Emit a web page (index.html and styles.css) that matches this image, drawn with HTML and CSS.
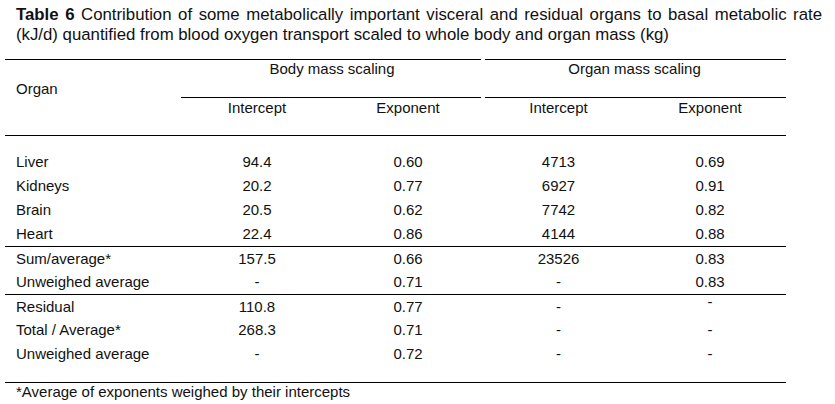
FILE: index.html
```html
<!DOCTYPE html>
<html>
<head>
<meta charset="utf-8">
<link rel="stylesheet" href="styles.css">
</head>
<body>
<div class="page">
  <p class="caption"><b>Table 6</b> Contribution of some metabolically important visceral and residual organs to basal metabolic rate (kJ/d) quantified from blood oxygen transport scaled to whole body and organ mass (kg)</p>
  <table class="data">
    <colgroup>
      <col class="c0"><col class="c1"><col class="c2"><col class="c3"><col class="c4">
    </colgroup>
    <thead>
      <tr class="h1">
        <th class="organ" rowspan="2">Organ</th>
        <th class="grp grp-body" colspan="2">Body mass scaling</th>
        <th class="grp grp-organ" colspan="2">Organ mass scaling</th>
      </tr>
      <tr class="h2">
        <th>Intercept</th>
        <th>Exponent</th>
        <th>Intercept</th>
        <th>Exponent</th>
      </tr>
    </thead>
    <tbody>
      <tr class="gap-top"><td colspan="5"></td></tr>
      <tr><td class="name">Liver</td><td>94.4</td><td>0.60</td><td>4713</td><td>0.69</td></tr>
      <tr><td class="name">Kidneys</td><td>20.2</td><td>0.77</td><td>6927</td><td>0.91</td></tr>
      <tr><td class="name">Brain</td><td>20.5</td><td>0.62</td><td>7742</td><td>0.82</td></tr>
      <tr><td class="name">Heart</td><td>22.4</td><td>0.86</td><td>4144</td><td>0.88</td></tr>
      <tr class="sep"><td class="name">Sum/average*</td><td>157.5</td><td>0.66</td><td>23526</td><td>0.83</td></tr>
      <tr><td class="name">Unweighed average</td><td>-</td><td>0.71</td><td>-</td><td>0.83</td></tr>
      <tr class="sep"><td class="name">Residual</td><td>110.8</td><td>0.77</td><td>-</td><td><span class="raised">-</span></td></tr>
      <tr><td class="name">Total / Average*</td><td>268.3</td><td>0.71</td><td>-</td><td>-</td></tr>
      <tr><td class="name">Unweighed average</td><td>-</td><td>0.72</td><td>-</td><td>-</td></tr>
      <tr class="gap-bottom"><td colspan="5"></td></tr>
    </tbody>
  </table>
  <p class="note">*Average of exponents weighed by their intercepts</p>
</div>
</body>
</html>
```

FILE: styles.css
```css
html, body {
  margin: 0;
  padding: 0;
  background: #fff;
}

body {
  font-family: "Liberation Sans", Arial, sans-serif;
  color: #111;
}

.page {
  width: 835px;
  height: 404px;
  overflow: hidden;
}

.caption {
  margin: 0;
  padding: 5px 0 0 16px;
  width: 806px;
  font-size: 16.8px;
  line-height: 20px;
  text-align: justify;
}

.caption b {
  font-weight: bold;
}

.data {
  margin: 14px 0 0 5px;
  width: 781px;
  table-layout: fixed;
  border-collapse: separate;
  border-spacing: 0;
  font-size: 15px;
}

.c0 { width: 176px; }
.c1 { width: 152px; }
.c2 { width: 150px; }
.c3 { width: 151px; }
.c4 { width: 152px; }

.data th,
.data td {
  padding: 0;
  font-weight: normal;
  text-align: center;
  vertical-align: top;
}

.h1 th {
  height: 37px;
  padding-top: 1px;
  padding-bottom: 1px;
  line-height: 18px;
}

.data th.organ {
  text-align: left;
  padding: 20px 0 0 11px;
  border-top: 1px solid #000;
  border-bottom: 1px solid #000;
}

.grp-body {
  background:
    linear-gradient(#000, #000) left top / calc(100% - 2px) 1px no-repeat,
    linear-gradient(#000, #000) left bottom / calc(100% - 2px) 1px no-repeat;
}

.grp-organ {
  background:
    linear-gradient(#000, #000) right top / calc(100% - 2px) 1px no-repeat,
    linear-gradient(#000, #000) right bottom / calc(100% - 2px) 1px no-repeat;
}

.h2 th {
  height: 36px;
  padding-top: 1px;
  line-height: 18px;
  border-bottom: 1px solid #000;
}

.data tbody td {
  height: 24px;
  line-height: 24px;
  vertical-align: middle;
  white-space: nowrap;
}

.data tbody tr.gap-top td {
  height: 14px;
  line-height: 14px;
}

.data tbody tr.sep td {
  height: 23px;
  line-height: 23px;
  border-top: 1px solid #000;
}

.data td.name {
  text-align: left;
  padding-left: 11px;
}

.data tbody tr.gap-bottom td {
  height: 16px;
  line-height: 16px;
  border-bottom: 1px solid #000;
}

.raised {
  line-height: 8px;
  vertical-align: 5px;
}

.note {
  margin: 0;
  padding-left: 16px;
  font-size: 15px;
  line-height: 18px;
}
```
